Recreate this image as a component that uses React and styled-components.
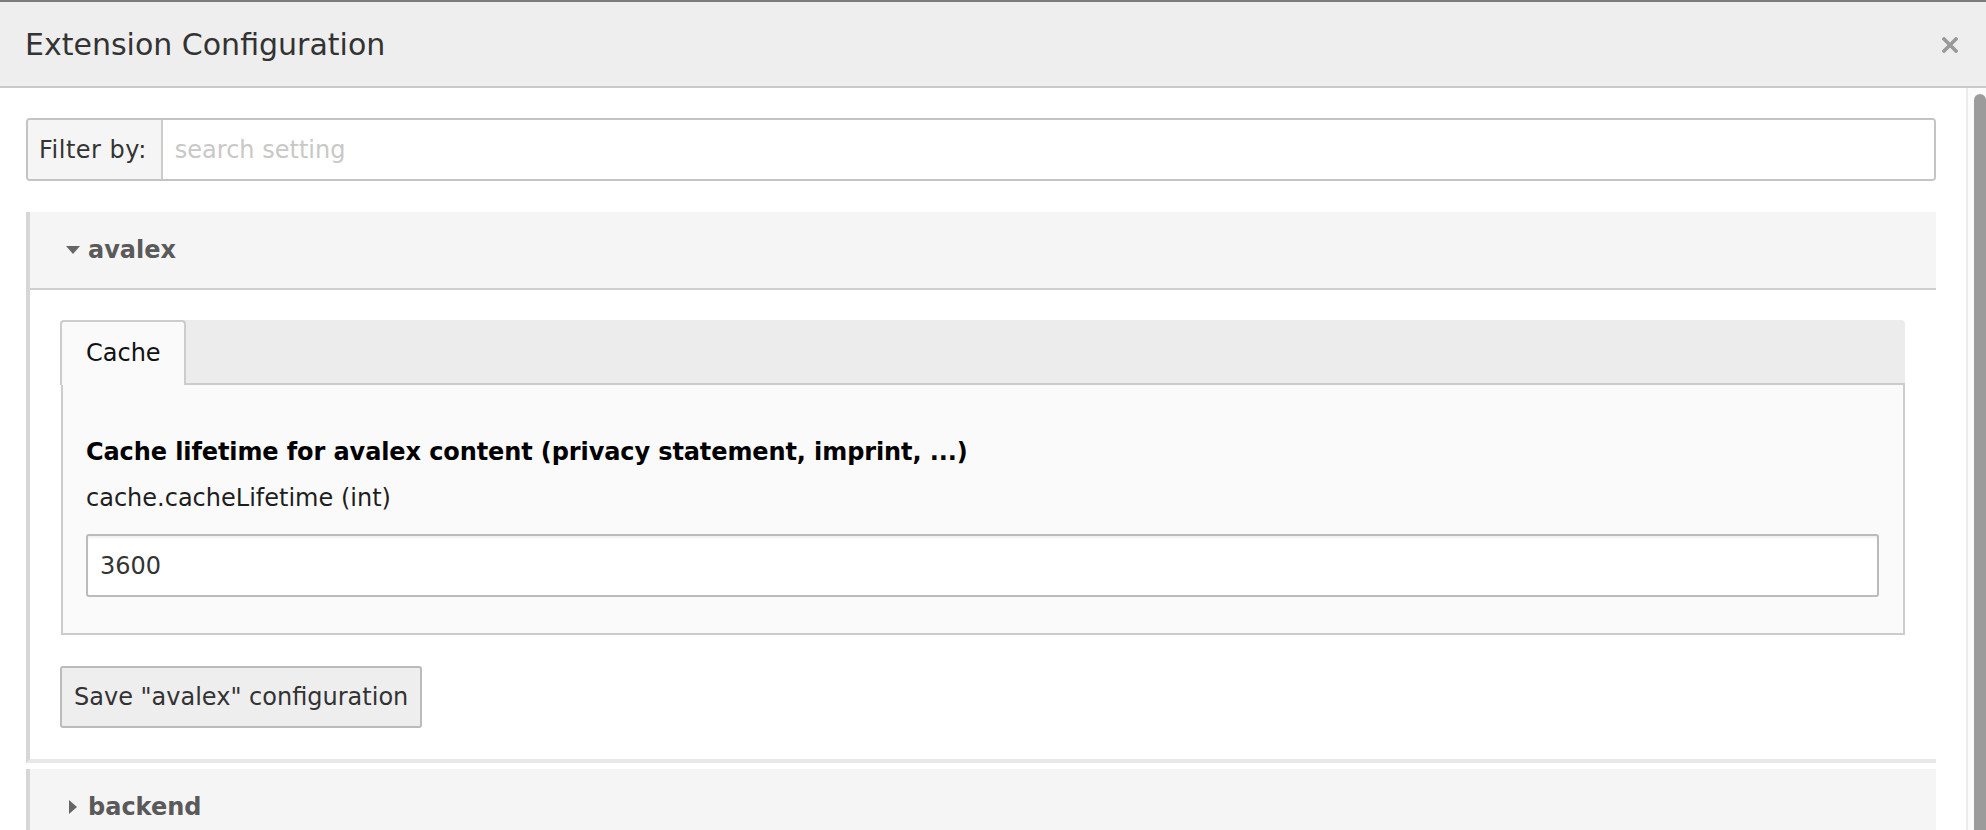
import React from "react"
import styled, { createGlobalStyle } from "styled-components"

const GlobalStyle = createGlobalStyle`
  html, body {
    margin: 0;
    padding: 0;
    background: #fff;
  }
  body {
    font-family: "DejaVu Sans", Verdana, sans-serif;
    font-size: 24px;
    color: #333;
  }
  * {
    box-sizing: border-box;
  }
`

const Modal = styled.div`
  display: flex;
  flex-direction: column;
  height: 100vh;
  overflow: hidden;
  border-top: 2px solid #7c7c7c;
`

const ModalHeader = styled.div`
  display: flex;
  align-items: center;
  justify-content: space-between;
  flex: 0 0 auto;
  height: 86px;
  padding: 2px 28px 0 25px;
  background: #eeeeee;
  border-bottom: 2px solid #c9c9c9;
`

const ModalTitle = styled.h4`
  margin: 0;
  font-size: 30px;
  font-weight: normal;
  line-height: 36px;
  color: #333;
`

const CloseButton = styled.button`
  display: flex;
  align-items: center;
  justify-content: center;
  width: 16px;
  height: 16px;
  padding: 0;
  border: none;
  background: none;
  color: #999;
  cursor: pointer;
`

const ModalRow = styled.div`
  display: flex;
  flex: 1 1 auto;
  min-height: 0;
`

const ModalBody = styled.div`
  flex: 1 1 auto;
  min-width: 0;
  padding: 30px 30px 0 26px;
  overflow: hidden;
`

const ScrollRail = styled.div`
  display: flex;
  flex: 0 0 20px;
  padding: 6px 0 0 6px;
  background: #fbfbfb;
  border-left: 2px solid #ececec;
`

const ScrollThumb = styled.div`
  flex: 1;
  background: #9b9b9b;
  border-radius: 6px 6px 0 0;
`

const FilterGroup = styled.div`
  display: flex;
  height: 63px;
  border: 2px solid #c4c4c4;
  border-radius: 4px;
  overflow: hidden;
`

const FilterLabel = styled.span`
  display: flex;
  align-items: center;
  padding: 0 14px 0 11px;
  background: #f5f5f5;
  border-right: 2px solid #cccccc;
  color: #333;
  letter-spacing: 0.5px;
  white-space: nowrap;
`

const FilterInput = styled.input`
  flex: 1;
  min-width: 0;
  padding: 0 12px;
  border: none;
  outline: none;
  background: #fff;
  font-family: inherit;
  font-size: 24px;
  color: #333;
  &::placeholder {
    color: #c8c8c8;
  }
`

const Panel = styled.section`
  margin-top: ${props => props.$gap}px;
  border-left: 4px solid #d7d7d7;
  border-bottom: 4px solid #e8e8e8;
`

const PanelHeading = styled.div`
  display: flex;
  align-items: center;
  gap: 8px;
  height: ${props => (props.$open ? 78 : 76)}px;
  padding-left: 36px;
  background: #f5f5f5;
  border-bottom: ${props => (props.$open ? "2px solid #cfcfcf" : "none")};
`

const CaretBox = styled.span`
  display: flex;
  align-items: center;
  justify-content: center;
  width: 14px;
`

const PanelTitle = styled.span`
  font-weight: bold;
  color: #5a5a5a;
  line-height: 36px;
`

const PanelBody = styled.div`
  padding: 30px 31px 31px 31px;
  background: #fff;
`

const TabBar = styled.div`
  display: flex;
  height: 65px;
  background: #ececec;
  border-radius: 4px 4px 0 0;
  border-bottom: 2px solid #cccccc;
`

const Tab = styled.div`
  display: flex;
  align-items: center;
  margin-bottom: -2px;
  margin-left: -1px;
  padding: 0 23px 2px 24px;
  background: ${props => (props.$active ? "#fafafa" : "transparent")};
  border: 2px solid ${props => (props.$active ? "#cccccc" : "transparent")};
  border-bottom: none;
  border-radius: 4px 4px 0 0;
  color: #111;
`

const TabContent = styled.div`
  padding: 49px 24px 36px 23px;
  background: #fafafa;
  border: 2px solid #cccccc;
  border-top: none;
`

const SettingLabel = styled.div`
  font-weight: bold;
  color: #000;
  line-height: 36px;
  letter-spacing: -0.1px;
`

const SettingName = styled.div`
  margin-top: 10px;
  color: #1e1e1e;
  line-height: 36px;
`

const SettingInput = styled.input`
  display: block;
  width: 100%;
  height: 63px;
  margin-top: 18px;
  padding: 0 12px;
  border: 2px solid #bbbbbb;
  border-radius: 3px;
  background: #fff;
  box-shadow: inset 0 2px 2px rgba(0, 0, 0, 0.06);
  font-family: inherit;
  font-size: 24px;
  color: #333;
  outline: none;
`

const SaveButton = styled.button`
  display: block;
  height: 62px;
  margin-top: 31px;
  margin-left: -1px;
  padding: 0 12px;
  border: 2px solid #bbbbbb;
  border-radius: 3px;
  background: #eeeeee;
  font-family: inherit;
  font-size: 24px;
  color: #333;
  cursor: pointer;
`

const CaretDown = () => (
  <svg width="14" height="8" viewBox="0 0 14 8">
    <path d="M0 0 L14 0 L7 8 Z" fill="#666" />
  </svg>
)

const CaretRight = () => (
  <svg width="8" height="14" viewBox="0 0 8 14">
    <path d="M0 0 L8 7 L0 14 Z" fill="#666" />
  </svg>
)

const CloseIcon = () => (
  <svg width="16" height="16" viewBox="0 0 16 16">
    <path
      d="M2 2 L14 14 M14 2 L2 14"
      stroke="currentColor"
      strokeWidth="3.6"
      strokeLinecap="square"
    />
  </svg>
)

const App = () => {
  return (
    <>
      <GlobalStyle />
      <Modal>
        <ModalHeader>
          <ModalTitle>Extension Configuration</ModalTitle>
          <CloseButton aria-label="Close">
            <CloseIcon />
          </CloseButton>
        </ModalHeader>
        <ModalRow>
          <ModalBody>
            <FilterGroup>
              <FilterLabel>Filter by:</FilterLabel>
              <FilterInput placeholder="search setting" />
            </FilterGroup>

            <Panel $gap={31}>
              <PanelHeading $open>
                <CaretBox>
                  <CaretDown />
                </CaretBox>
                <PanelTitle>avalex</PanelTitle>
              </PanelHeading>
              <PanelBody>
                <TabBar>
                  <Tab $active>Cache</Tab>
                </TabBar>
                <TabContent>
                  <SettingLabel>
                    Cache lifetime for avalex content (privacy statement, imprint, ...)
                  </SettingLabel>
                  <SettingName>cache.cacheLifetime (int)</SettingName>
                  <SettingInput defaultValue="3600" />
                </TabContent>
                <SaveButton>Save "avalex" configuration</SaveButton>
              </PanelBody>
            </Panel>

            <Panel $gap={6}>
              <PanelHeading>
                <CaretBox>
                  <CaretRight />
                </CaretBox>
                <PanelTitle>backend</PanelTitle>
              </PanelHeading>
            </Panel>
          </ModalBody>
          <ScrollRail>
            <ScrollThumb />
          </ScrollRail>
        </ModalRow>
      </Modal>
    </>
  )
}

export default App
